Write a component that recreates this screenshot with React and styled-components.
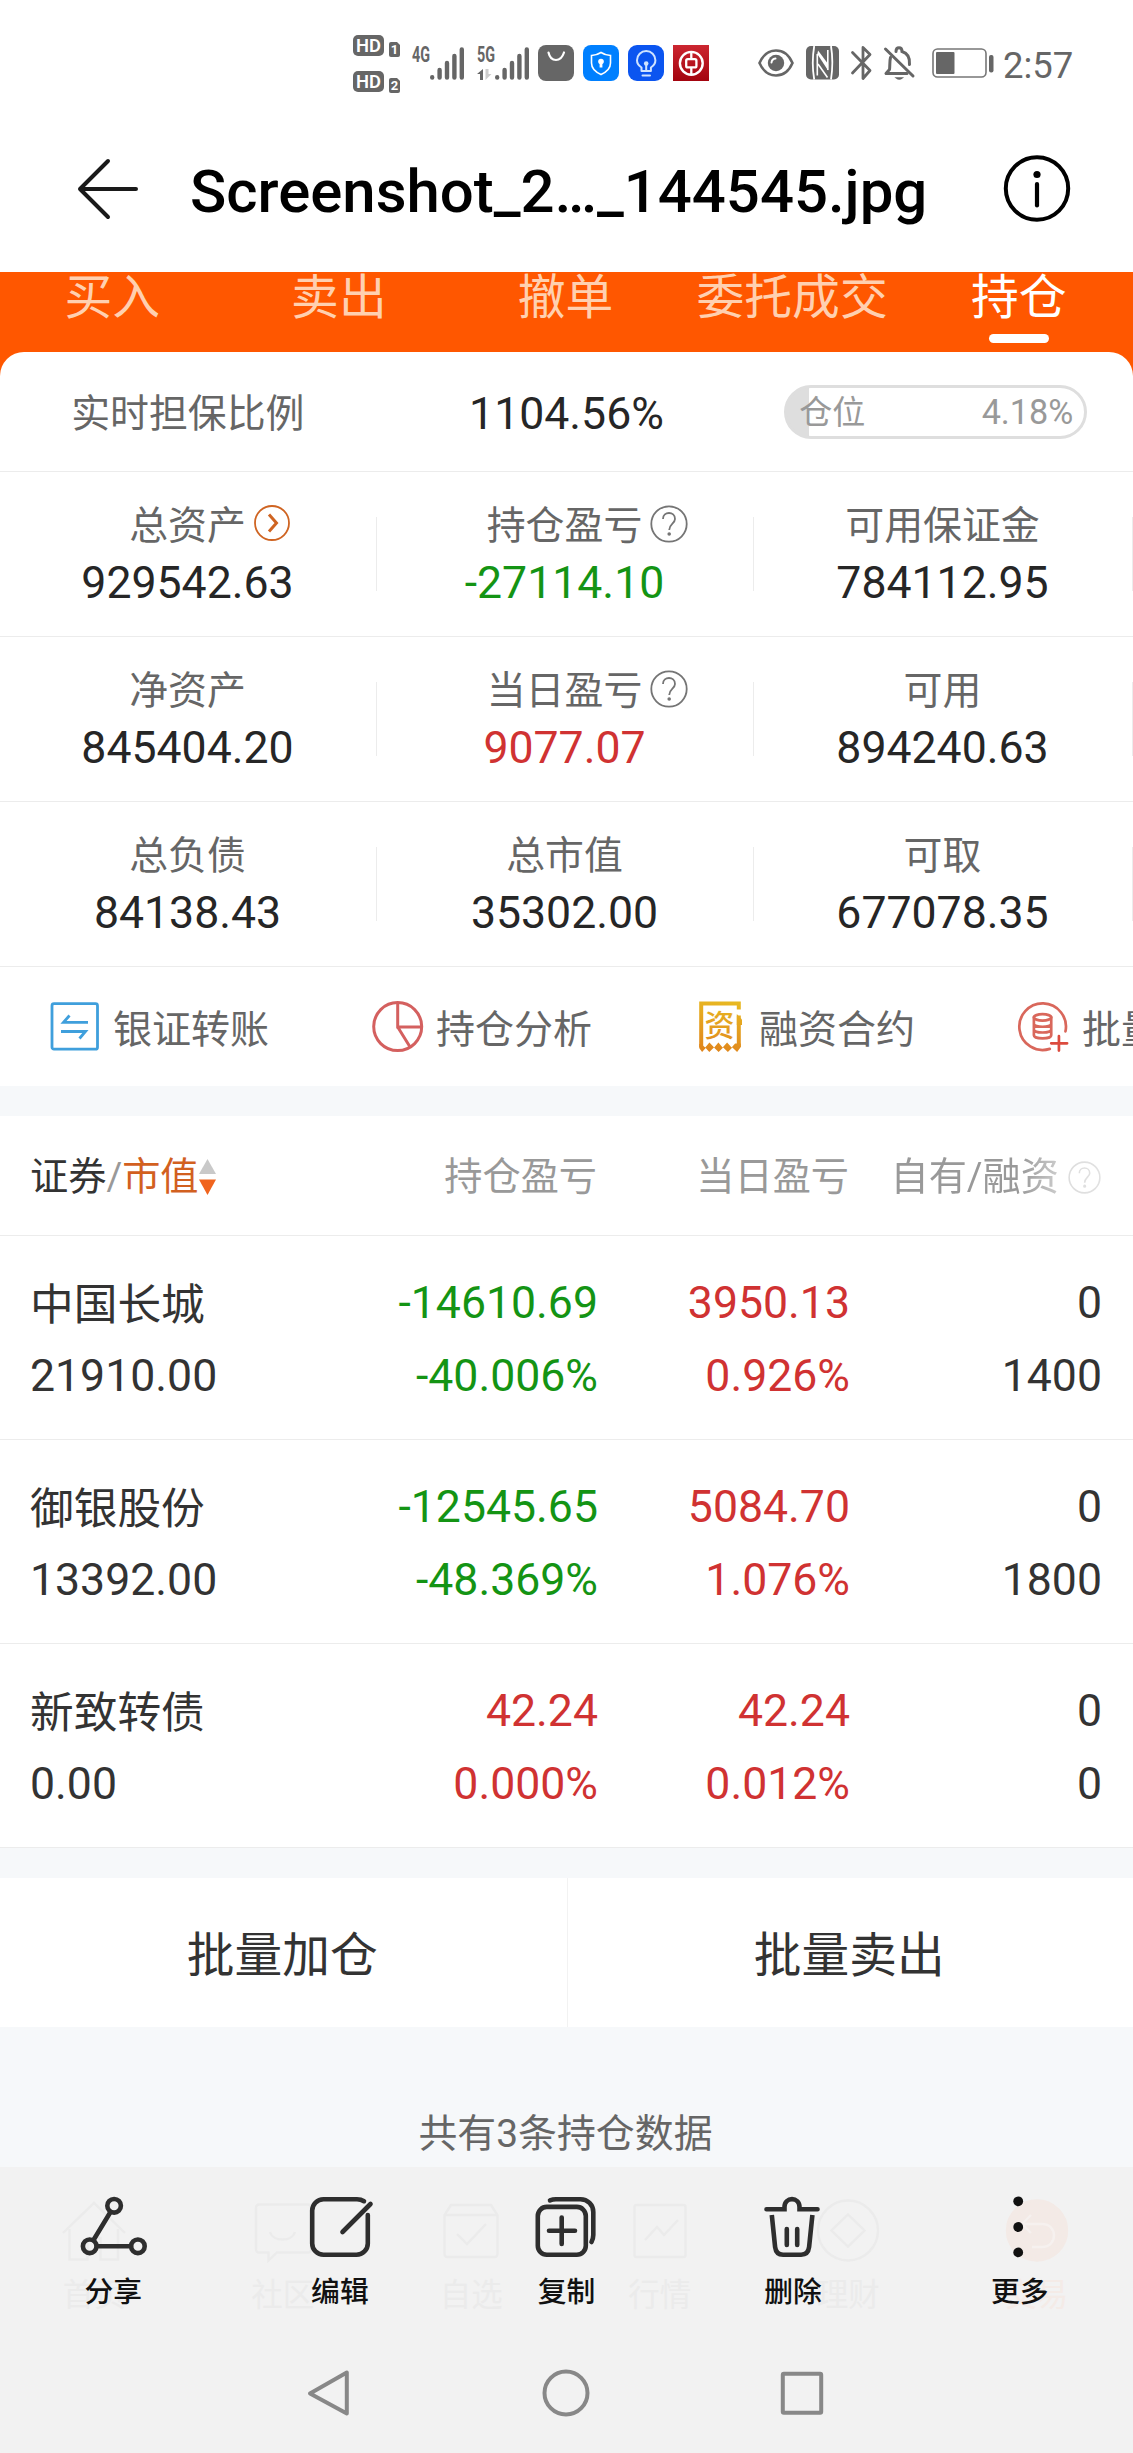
import React from 'react'
import styled, { createGlobalStyle, css } from 'styled-components';

const stats = [
    [
        { label: '总资产', value: '929542.63', icon: 'arrow' },
        { label: '持仓盈亏', value: '-27114.10', icon: 'help', tone: 'down' },
        { label: '可用保证金', value: '784112.95' },
    ],
    [
        { label: '净资产', value: '845404.20' },
        { label: '当日盈亏', value: '9077.07', icon: 'help', tone: 'up' },
        { label: '可用', value: '894240.63' },
    ],
    [
        { label: '总负债', value: '84138.43' },
        { label: '总市值', value: '35302.00' },
        { label: '可取', value: '677078.35' },
    ],
];

const holdings = [
    { name: '中国长城', worth: '21910.00', profit: ['-14610.69', '-40.006%'], day: ['3950.13', '0.926%'], own: ['0', '1400'] },
    { name: '御银股份', worth: '13392.00', profit: ['-12545.65', '-48.369%'], day: ['5084.70', '1.076%'], own: ['0', '1800'] },
    { name: '新致转债', worth: '0.00', profit: ['42.24', '0.000%'], day: ['42.24', '0.012%'], own: ['0', '0'] },
];

const tabs = ['买入', '卖出', '撤单', '委托成交', '持仓'];

const tone = (value) => value.startsWith('-') ? 'down' : 'up';

/* ---------- status bar ---------- */

const HdBadge = ({ sim }) => (
    <svg width="48" height="22" viewBox="0 0 48 22">
        <rect x="0" y="0" width="31" height="21" rx="5" fill="#666" />
        <text x="15.5" y="17.2" fill="#fff" fontSize="19" fontWeight="600" textAnchor="middle" textLength="25" lengthAdjust="spacingAndGlyphs">HD</text>
        <path d="M38 7h6l3 3v10a2 2 0 0 1-2 2h-7a2 2 0 0 1-2-2V9a2 2 0 0 1 2-2z" fill="#666" />
        <text x="41.4" y="19.4" fill="#fff" fontSize="13" fontWeight="700" textAnchor="middle">{sim}</text>
    </svg>
)

const Signal = ({ type, data }) => (
    <svg width="53" height="35" viewBox="0 0 53 35">
        <text x="0" y="16" fill="#666" fontSize="21.5" fontWeight="700" textLength="18" lengthAdjust="spacingAndGlyphs">{type}</text>
        {data && <path d="M0 28l6-5v11H3v-6z" fill="#666" />}
        {data && <path d="M8.5 23v11l6-6h-3v-5z" fill="#ccc" />}
        <g stroke="#666" strokeWidth="4.4" strokeLinecap="round">
            <path d="M20.2 31.2v.4M27.6 24v7.6M35 17v14.6M42.4 10v21.6M49.8 3.4v28.2" />
        </g>
    </svg>
)

const BagIcon = () => (
    <svg width="36" height="36" viewBox="0 0 36 36">
        <rect width="36" height="36" rx="8" fill="#666" />
        <path d="M10.5 7.5c1 4.6 4 7.5 7.5 7.5s6.5-2.900 8-7.5" fill="none" stroke="#fff" strokeWidth="2.2" strokeLinecap="round" />
    </svg>
)

const ShieldIcon = () => (
    <svg width="36" height="36" viewBox="0 0 36 36">
        <rect width="36" height="36" rx="8" fill="#0080ff" />
        <path d="M18 7.5c3 2 6 2.8 9.5 3V18c0 5.5-4 9-9.5 11.5C12.5 27 8.5 23.5 8.5 18v-7.5c3.5-.2 6.5-1 9.5-3z" fill="none" stroke="#fff" strokeWidth="1.6" />
        <circle cx="18" cy="16.5" r="2.8" fill="#fff" />
        <path d="M16.6 17h2.800v5.5h-2.800z" fill="#fff" />
    </svg>
)

const BulbIcon = () => (
    <svg width="36" height="36" viewBox="0 0 36 36">
        <rect width="36" height="36" rx="9" fill="#0b55f0" />
        <g fill="none" stroke="#cfe3ff" strokeWidth="2" strokeLinecap="round" strokeLinejoin="round">
            <path d="M13.5 26v-3.5c-2.700-1.7-4.5-4-4.5-7.2a9.200 9.200 0 0 1 18.400 0c0 3.200-1.800 5.500-4.500 7.200V26z" />
            <path d="M18.200 19v7M14.500 30.500h7.500" />
        </g>
        <circle cx="18.2" cy="18.5" r="2.3" fill="#cfe3ff" />
    </svg>
)

const BankIcon = () => (
    <svg width="36" height="36" viewBox="0 0 36 36">
        <defs>
            <linearGradient id="bank" x1="0" y1="0" x2="0" y2="1">
                <stop offset="0" stopColor="#cc2630" />
                <stop offset="1" stopColor="#a3040f" />
            </linearGradient>
        </defs>
        <rect width="36" height="36" fill="url(#bank)" />
        <g fill="none" stroke="#fff">
            <circle cx="18.3" cy="18.3" r="11.4" strokeWidth="2.4" />
            <rect x="13.2" y="14.2" width="10.2" height="8.2" rx="1.5" strokeWidth="2.3" />
            <path d="M18.3 7v7M18.3 22.5v7" strokeWidth="2.3" />
        </g>
    </svg>
)

const EyeIcon = () => (
    <svg width="36" height="28" viewBox="0 0 36 28">
        <path d="M1.5 14C5 6 11 1.5 18 1.5S31 6 34.5 14C31 22 25 26.5 18 26.5S5 22 1.5 14z" fill="none" stroke="#666" strokeWidth="2.6" />
        <circle cx="18" cy="14" r="8.2" fill="#666" />
        <path d="M13.5 13.5a4.5 4.5 0 0 1 4-4" fill="none" stroke="#fff" strokeWidth="2" strokeLinecap="round" />
    </svg>
)

const NfcIcon = () => (
    <svg width="33" height="34" viewBox="0 0 33 34">
        <rect width="33" height="33.500" rx="5" fill="#666" />
        <path d="M8.200 33.500C6.200 22 6.200 12 8.200 0M25 0c1.800 11 1.800 22 0 33.500" fill="none" stroke="#fff" strokeWidth="1.800" />
        <path d="M11.300 8v21.500M21.800 4v20" fill="none" stroke="#fff" strokeWidth="1.600" />
        <path d="M11.300 8l10.800 16.500v-6.500l-10-13.500z" fill="#fff" />
        <path d="M12 18l9.500 13.500" stroke="#fff" strokeWidth="1.600" />
    </svg>
)

const BluetoothIcon = () => (
    <svg width="21" height="36" viewBox="0 0 21 36" fill="none" stroke="#666" strokeWidth="2.800" strokeLinejoin="round" strokeLinecap="round">
        <path d="M1.5 7.5L19 25.500l-7 8V2.500l7 7L1.500 28" />
    </svg>
)

const BellOffIcon = () => (
    <svg width="31" height="34" viewBox="0 0 31 34" fill="none" stroke="#666" strokeWidth="3" strokeLinecap="round">
        <path d="M1.5 3l27.500 27" />
        <path d="M6.500 11.500C5.500 15 6 21 5.500 23.500L2 27.500h21" strokeLinejoin="round" />
        <path d="M12 5.500C12 .5 18 .5 18 5.500c6.500 2 8 7 7.500 13" />
        <path d="M12.500 32c1.500 1.200 4 1.200 5.500 0z" fill="#666" strokeWidth="1.500" />
    </svg>
)

const BatteryIcon = () => (
    <svg width="62" height="30" viewBox="0 0 62 30">
        <rect x="1" y="1" width="53" height="28" rx="4.5" fill="none" stroke="#777" strokeWidth="1.6" />
        <rect x="4" y="4" width="18.5" height="22" rx="1" fill="#666" />
        <rect x="57" y="7" width="4.5" height="17.5" rx="2" fill="#666" />
    </svg>
)

/* ---------- header ---------- */

const BackIcon = () => (
    <svg width="62" height="62" viewBox="0 0 62 62" fill="none" stroke="#1a1a1a" strokeWidth="4" strokeLinecap="round" strokeLinejoin="round">
        <path d="M31 3L3 31l28 28M3 31h56" />
    </svg>
)

const InfoIcon = () => (
    <svg width="68" height="68" viewBox="0 0 68 68">
        <circle cx="34" cy="33.5" r="31.2" fill="none" stroke="#000" strokeWidth="4" />
        <circle cx="34" cy="19.5" r="3.6" fill="#000" />
        <path d="M34 29v21.5" stroke="#000" strokeWidth="4.200" strokeLinecap="round" />
    </svg>
)

const CircleArrow = () => (
    <svg width="37" height="37" viewBox="0 0 37 37" fill="none" stroke="#cf6422">
        <circle cx="18" cy="18" r="17" strokeWidth="1.8" />
        <path d="M15 9.5l7.500 8.500-7.500 8.500" strokeWidth="3" />
    </svg>
)

const CircleHelp = ({ size = 38, color = '#757575' }) => (
    <svg width={size} height={size} viewBox="0 0 38 38" fill="none" stroke={color} strokeWidth="1.8">
        <circle cx="19" cy="19" r="17.7" />
        <path d="M13 14c0-8 12-8 12 0 0 4.500-5.800 5-5.800 11" />
        <circle cx="19.2" cy="29" r=".9" fill={color} />
    </svg>
)

/* ---------- shortcuts ---------- */

const TransferIcon = () => (
    <svg width="52" height="52" viewBox="0 0 52 52" fill="none" stroke="#3f9fdc" strokeWidth="2.800">
        <rect x="3" y="2.700" width="45.500" height="45.500" rx="2" />
        <path d="M39 21.300H14.500l6-6.800M12 30.500h24.500l-6 7" />
    </svg>
)

const PieIcon = () => (
    <svg width="52" height="52" viewBox="0 0 52 52" fill="none" stroke="#d4605f" strokeWidth="3">
        <circle cx="25.7" cy="25.6" r="24" />
        <path d="M25.700 1.800V26H50M25.700 26l12.700 20.500" />
    </svg>
)

const ContractIcon = () => (
    <svg width="52" height="52" viewBox="0 0 52 52">
        <defs>
            <linearGradient id="gold" gradientUnits="userSpaceOnUse" x1="30" y1="0" x2="20" y2="52">
                <stop offset="0" stopColor="#e8b822" />
                <stop offset="1" stopColor="#e0851c" />
            </linearGradient>
        </defs>
        <path d="M43.800 8.500V2.500H6.200V46M43.800 14.500V46" fill="none" stroke="url(#gold)" strokeWidth="4" />
        <path d="M41.800 13l5.200 5.500V24h-5.200z" fill="url(#gold)" />
        <path d="M4.200 43h2l4 3.500 4.200-5 4.800 5 4.200-5 4.200 5 4.500-5 4.500 5 3.500-4 5.700 0v3.500l-3.700 5-4.700-4.500-4.500 4.500-4.700-4.500-4.600 4.500-4.700-4.500-4.600 4.500-3.600-4-3.600 4-2.900-4z" fill="url(#gold)" />
        <text x="24.5" y="35" fill="url(#gold)" fontSize="30" fontWeight="500" textAnchor="middle">资</text>
    </svg>
)

const BatchIcon = () => (
    <svg width="54" height="52" viewBox="0 0 54 52" fill="none" stroke="#d9675b" strokeWidth="2.800" strokeLinecap="round">
        <path d="M33 48.700A24.200 24.200 0 1 1 49.300 30.500" />
        <ellipse cx="25.5" cy="16" rx="9" ry="3.3" />
        <path d="M16.500 16v18.500c0 4.500 18 4.500 18 0V16M16.500 22.500c0 4.300 18 4.300 18 0M16.500 28.500c0 4.300 18 4.300 18 0" />
        <path d="M42.500 35.500v15M34.500 43h16.500" stroke="#dc4b3e" />
    </svg>
)

const SortIcon = () => (
    <svg width="17" height="36" viewBox="0 0 17 36">
        <path d="M8.500 0L17 15H0z" fill="#c9c9c9" />
        <path d="M8.500 36L0 20.500h17z" fill="#f0641e" />
    </svg>
)

const shortcuts = [
    { text: '银证转账', icon: <TransferIcon /> },
    { text: '持仓分析', icon: <PieIcon /> },
    { text: '融资合约', icon: <ContractIcon /> },
    { text: '批量加仓', icon: <BatchIcon /> },
];

/* ---------- bottom bars ---------- */

const appTabs = [
    { text: '首页', icon: <path d="M2 35L33 5l31 30M8.500 31v30.500h18V40h13v21.500H57V31" /> },
    { text: '社区', icon: <path d="M9 6.500h49a3 3 0 0 1 3 3v42a3 3 0 0 1-3 3H27l-8.500 8v-8H9a3 3 0 0 1-3-3v-42a3 3 0 0 1 3-3zM20 34c3 10 22 10 25 0" /> },
    { text: '自选', icon: <path d="M6.500 17L13 7h40l6.500 10v39a3 3 0 0 1-3 3h-47a3 3 0 0 1-3-3zM6.500 17h53M19 36l10 10 19-20" /> },
    { text: '行情', icon: <path d="M9.500 7h47a2 2 0 0 1 2 2v48a2 2 0 0 1-2 2h-47a2 2 0 0 1-2-2V9a2 2 0 0 1 2-2zM18 42l12-13 7 8 14-15" /> },
    { text: '理财', icon: <><circle cx="33" cy="32.5" r="30" /><path d="M33 16.500l16.500 16L33 48.500 16.500 32.500z" /></> },
    { text: '交易', warm: true, icon: <><circle cx="33" cy="32.5" r="30" fill="#f3eae6" stroke="#f3eae6" /><path d="M27 17L18 26l9 9M18 26h20c16 0 16 23 0 23H28" stroke="#f6f1ef" /></> },
];

const tools = [
    {
        text: '分享',
        icon: <>
            <circle cx="34.1" cy="9.8" r="6.8" />
            <circle cx="9.7" cy="50.3" r="6.8" />
            <circle cx="57.9" cy="50.3" r="6.8" />
            <path d="M30.500 16L13.500 44M17 50.300h34" />
        </>,
    },
    {
        text: '编辑',
        icon: <>
            <path d="M57 5.200c-2-1.300-4-2-7-2H16.500A11.300 11.300 0 0 0 5.200 14.500v33a11.300 11.300 0 0 0 11.300 11.300h33a11.300 11.300 0 0 0 11.300-11.300V19" />
            <path d="M35.500 36L63.500 8" />
        </>,
    },
    {
        text: '复制',
        icon: <>
            <rect x="4.8" y="10.9" width="48" height="47.9" rx="9" />
            <path d="M28.700 21.500v26.500M16 34.700h26" />
            <path d="M17 4.300c2-.8 4-1.100 6-1.100h24.500A12.800 12.800 0 0 1 60.300 16v23c0 3-.8 5-1.800 7" />
        </>,
    },
    {
        text: '删除',
        icon: <>
            <path d="M6.500 13.200h18V11c0-10.500 15-10.500 15 0v2.200h18" />
            <path d="M11.800 19l3.300 32c.6 5 3.500 7.700 8 7.700h18c4.500 0 7.400-2.700 8-7.700l3.300-32" strokeLinecap="butt" />
            <path d="M26.800 33v16M37.200 33v16" />
        </>,
    },
    {
        text: '更多',
        icon: <g fill="#111" stroke="none">
            <circle cx="31.2" cy="5.3" r="4.9" />
            <circle cx="31.2" cy="31" r="4.9" />
            <circle cx="31.2" cy="56.4" r="4.9" />
        </g>,
    },
];

const App = () => {
    return (
        <>
            <GlobalStyle />
            <Screen>
                <StatusBar>
                    <HdStack>
                        <HdBadge sim="1" />
                        <HdBadge sim="2" />
                    </HdStack>
                    <StatusGroup $gap={12}>
                        <Signal type="4G" />
                        <Signal type="5G" data />
                    </StatusGroup>
                    <StatusGroup $gap={9} $start={8}>
                        <BagIcon />
                        <ShieldIcon />
                        <BulbIcon />
                        <BankIcon />
                    </StatusGroup>
                    <StatusGroup $gap={12} $start={49}>
                        <EyeIcon />
                        <NfcIcon />
                        <BluetoothIcon />
                        <BellOffIcon />
                    </StatusGroup>
                    <StatusGroup $gap={9} $start={17}>
                        <BatteryIcon />
                        <Clock>2:57</Clock>
                    </StatusGroup>
                </StatusBar>

                <Header>
                    <BackIcon />
                    <FileName>Screenshot_2…_144545.jpg</FileName>
                    <InfoIcon />
                </Header>

                <TradePanel>
                    <TabRow>
                        {tabs.map((tab) => <Tab key={tab} $active={tab === '持仓'}>{tab}</Tab>)}
                    </TabRow>
                    <Card>
                        <RatioRow>
                            <RatioLabel>实时担保比例</RatioLabel>
                            <RatioValue>1104.56%</RatioValue>
                            <PositionPill><span>仓位</span><span>4.18%</span></PositionPill>
                        </RatioRow>
                        {stats.map((row, i) => (
                            <StatRow key={i}>
                                {row.map((stat) => (
                                    <Stat key={stat.label}>
                                        <StatLabel>
                                            {stat.label}
                                            {stat.icon && <StatIcon>{stat.icon === 'arrow' ? <CircleArrow /> : <CircleHelp />}</StatIcon>}
                                        </StatLabel>
                                        <StatValue $tone={stat.tone}>{stat.value}</StatValue>
                                    </Stat>
                                ))}
                            </StatRow>
                        ))}
                        <Shortcuts>
                            {shortcuts.map(({ text, icon }) => (
                                <Shortcut key={text}>{icon}<span>{text}</span></Shortcut>
                            ))}
                        </Shortcuts>
                    </Card>
                </TradePanel>

                <Holdings>
                    <HoldingHead>
                        <SortLabel><b>证券</b>/<em>市值</em><SortIcon /></SortLabel>
                        <HeadCell>持仓盈亏</HeadCell>
                        <HeadCell>当日盈亏</HeadCell>
                        <FadingCell>自有/融资<CircleHelp size={33} color="#aaa" /></FadingCell>
                    </HoldingHead>
                    {holdings.map((item) => (
                        <HoldingRow key={item.name}>
                            <NameCell><StockName>{item.name}</StockName><span>{item.worth}</span></NameCell>
                            <NumberCell $tone={tone(item.profit[0])}><span>{item.profit[0]}</span><span>{item.profit[1]}</span></NumberCell>
                            <NumberCell $tone={tone(item.day[0])}><span>{item.day[0]}</span><span>{item.day[1]}</span></NumberCell>
                            <NumberCell><span>{item.own[0]}</span><span>{item.own[1]}</span></NumberCell>
                        </HoldingRow>
                    ))}
                </Holdings>

                <BatchRow>
                    <BatchButton>批量加仓</BatchButton>
                    <BatchButton>批量卖出</BatchButton>
                </BatchRow>
                <Summary>共有3条持仓数据</Summary>

                <BottomBar>
                    <AppTabs>
                        {appTabs.map(({ text, icon, warm }) => (
                            <AppTab key={text} $warm={warm}>
                                <svg width="66" height="66" viewBox="0 0 66 66" fill="none" stroke="#ebebeb" strokeWidth="2.4">{icon}</svg>
                                <span>{text}</span>
                            </AppTab>
                        ))}
                    </AppTabs>
                    <Tools>
                        {tools.map(({ text, icon }) => (
                            <Tool key={text}>
                                <svg width="66" height="62" viewBox="0 0 66 62" fill="none" stroke="#2e2e2e" strokeWidth="4.6" strokeLinecap="round">{icon}</svg>
                                <span>{text}</span>
                            </Tool>
                        ))}
                    </Tools>
                    <NavBar>
                        <svg viewBox="0 0 48 48"><path d="M40.800 3.500v41L4 24.500z" /></svg>
                        <svg viewBox="0 0 48 48"><circle cx="24" cy="24" r="21.5" /></svg>
                        <svg viewBox="0 0 48 48"><rect x="4.8" y="4.8" width="38.4" height="39" rx="1" /></svg>
                    </NavBar>
                </BottomBar>
            </Screen>
        </>
    )
}

export default App;

const GlobalStyle = createGlobalStyle`
    * {
        box-sizing: border-box;
    }

    body {
        margin: 0;
        background: #fff;
        font-family: Roboto, "Noto Sans CJK SC", sans-serif;
    }

    svg {
        display: block;
        flex: none;
        overflow: visible;
    }
`;

const line = '#ececec';
const tones = { up: '#d03232', down: '#149414' };

const Screen = styled.div`
    width: 1133px;
    height: 2453px;
    overflow: hidden;
    display: flex;
    flex-direction: column;
    background: #f6f8fa;
`;

const StatusBar = styled.div`
    height: 126px;
    flex: none;
    display: flex;
    align-items: center;
    padding-left: 353px;
    background: #fff;
`;

const HdStack = styled.div`
    display: flex;
    flex-direction: column;
    gap: 14px;
    width: 59px;
    padding-top: 1px;
`;

const StatusGroup = styled.div`
    display: flex;
    align-items: center;
    gap: ${({ $gap }) => $gap}px;
    margin-left: ${({ $start }) => $start || 0}px;
`;

const Clock = styled.div`
    color: #666;
    font-size: 36.5px;
    line-height: 40px;
    padding-top: 5px;
`;

const Header = styled.div`
    height: 146px;
    flex: none;
    display: flex;
    align-items: center;
    padding: 0 62px 20px 77px;
    background: #fff;
`;

const FileName = styled.div`
    flex: 1;
    margin-left: 51px;
    padding-top: 6px;
    color: #000;
    font-size: 59.9px;
    font-weight: 500;
    line-height: 72px;
    white-space: nowrap;
`;

const TradePanel = styled.div`
    flex: none;
    background: #ff5700;
`;

const TabRow = styled.div`
    display: grid;
    grid-template-columns: repeat(5, 1fr);
    height: 80px;
`;

const Tab = styled.div`
    padding-right: 2px;
    color: #ffd0b0;
    font-size: 47.8px;
    line-height: 52px;
    text-align: center;

    ${({ $active }) => $active && css`
        color: #fff;

        &::after {
            content: "";
            display: block;
            width: 60px;
            height: 9px;
            margin: 10px auto 0;
            border-radius: 5px;
            background: #fff;
        }
    `}
`;

const Card = styled.div`
    background: #fff;
    border-radius: 24px 24px 0 0;
`;

const RatioRow = styled.div`
    display: grid;
    grid-template-columns: repeat(3, 1fr);
    align-items: center;
    height: 120px;
    border-bottom: 1px solid ${line};
    text-align: center;
    line-height: 50px;
`;

const RatioLabel = styled.div`
    padding: 4px 2px 0 0;
    color: #666;
    font-size: 38.9px;
`;

const RatioValue = styled.div`
    padding-top: 5px;
    color: #262626;
    font-size: 44.6px;
`;

const PositionPill = styled.div`
    display: flex;
    justify-content: space-between;
    width: 303px;
    height: 54px;
    margin-left: 29px;
    padding: 0 11px 0 12px;
    border: 3px solid #dedede;
    border-radius: 27px;
    background: linear-gradient(#dedede, #dedede) no-repeat 0 0 / 22px 100%;
    color: #999;
    font-size: 33px;
    line-height: 49px;

    > span:last-child {
        font-size: 34.2px;
        line-height: 48px;
    }
`;

const StatRow = styled.div`
    display: grid;
    grid-template-columns: 377px 377px 1fr;
    height: 165px;
    border-bottom: 1px solid ${line};
`;

const Stat = styled.div`
    display: flex;
    flex-direction: column;
    align-items: center;
    padding: 29px 2px 0 0;
    background: linear-gradient(${line}, ${line}) no-repeat right 45px / 1px 74px;
`;

const StatLabel = styled.div`
    position: relative;
    color: #666;
    font-size: 38.9px;
    line-height: 50px;
`;

const StatIcon = styled.span`
    position: absolute;
    left: calc(100% + 8px);
    top: 4px;
`;

const StatValue = styled.div`
    margin-top: 2px;
    color: ${({ $tone }) => tones[$tone] || '#262626'};
    font-size: 44.6px;
    line-height: 60px;
`;

const Shortcuts = styled.div`
    display: flex;
    height: 119px;
    overflow: hidden;
`;

const Shortcut = styled.div`
    flex: 0 0 323px;
    display: flex;
    align-items: center;
    gap: 12px;
    padding-left: 49px;
    color: #666;
    font-size: 39px;
    line-height: 50px;
    white-space: nowrap;

    > span {
        padding-top: 6px;
    }

    > svg {
        width: 52px;
    }
`;

const Holdings = styled.div`
    flex: none;
    margin: 30px 0;
    background: #fff;
`;

const HoldingHead = styled.div`
    display: grid;
    grid-template-columns: 315px repeat(3, 252px);
    align-items: center;
    height: 120px;
    padding: 3px 32px 0 30px;
    border-bottom: 1px solid ${line};
    color: #999;
    font-size: 38.2px;
    line-height: 50px;
`;

const SortLabel = styled.div`
    display: flex;
    align-items: center;

    > b {
        color: #333;
        font-weight: 400;
    }

    > em {
        color: #d2601f;
        font-style: normal;
    }
`;

const HeadCell = styled.div`
    padding-right: -1px;
    text-align: right;
`;

const FadingCell = styled(HeadCell)`
    display: flex;
    align-items: center;
    justify-content: flex-end;
    gap: 9px;
    -webkit-mask-image: linear-gradient(to right, #000 68%, rgba(0, 0, 0, 0.4) 86%, rgba(0, 0, 0, 0.35));
    mask-image: linear-gradient(to right, #000 68%, rgba(0, 0, 0, 0.4) 86%, rgba(0, 0, 0, 0.35));
`;

const HoldingRow = styled.div`
    display: grid;
    grid-template-columns: 316px repeat(3, 252px);
    height: 204px;
    padding: 42px 31px 0 30px;
    border-bottom: 1px solid ${line};
`;

const NumberCell = styled.div`
    display: flex;
    flex-direction: column;
    align-items: flex-end;
    gap: 23px;
    color: ${({ $tone }) => tones[$tone] || '#333'};
    font-size: 44.6px;
    line-height: 50px;
`;

const NameCell = styled(NumberCell)`
    align-items: flex-start;
    gap: 21px;
    padding-top: 2px;
`;

const StockName = styled.span`
    font-size: 43.7px;
`;

const BatchRow = styled.div`
    flex: none;
    display: grid;
    grid-template-columns: repeat(2, 1fr);
    height: 149px;
    background: #fff;
`;

const BatchButton = styled.div`
    padding: 50px 2px 0 0;
    color: #333;
    font-size: 47.7px;
    line-height: 56px;
    text-align: center;

    & + & {
        border-left: 1px solid #f2f2f2;
    }
`;

const Summary = styled.div`
    flex: none;
    height: 140px;
    padding: 83px 2px 0 0;
    color: #666;
    font-size: 38.9px;
    line-height: 47px;
    text-align: center;
`;

const BottomBar = styled.div`
    position: relative;
    flex: 1;
    background: #f2f2f2;
`;

/* app navigation showing faintly through the translucent toolbar */
const AppTabs = styled.div`
    position: absolute;
    inset: 0;
    display: grid;
    grid-template-columns: repeat(6, 1fr);
    padding: 31px 2px 0 0;
`;

const AppTab = styled.div`
    display: flex;
    flex-direction: column;
    align-items: center;
    gap: 12px;
    color: ${({ $warm }) => $warm ? '#f4ebe7' : '#ebebeb'};
    font-size: 31.5px;
    line-height: 40px;
`;

const Tools = styled.div`
    position: relative;
    display: grid;
    grid-template-columns: repeat(5, 1fr);
    height: 167px;
    padding-top: 29px;
`;

const Tool = styled.div`
    display: flex;
    flex-direction: column;
    align-items: center;
    gap: 16px;
    color: #111;
    font-size: 28.8px;
    font-weight: 500;
    line-height: 36px;
`;

const NavBar = styled.div`
    position: relative;
    display: flex;
    align-items: center;
    justify-content: center;
    gap: 188px;
    height: 119px;
    padding: 0 2px 2px 0;

    > svg {
        width: 48px;
        height: 48px;
        fill: none;
        stroke: #888;
        stroke-width: 4px;
        stroke-linejoin: round;
    }
`;
